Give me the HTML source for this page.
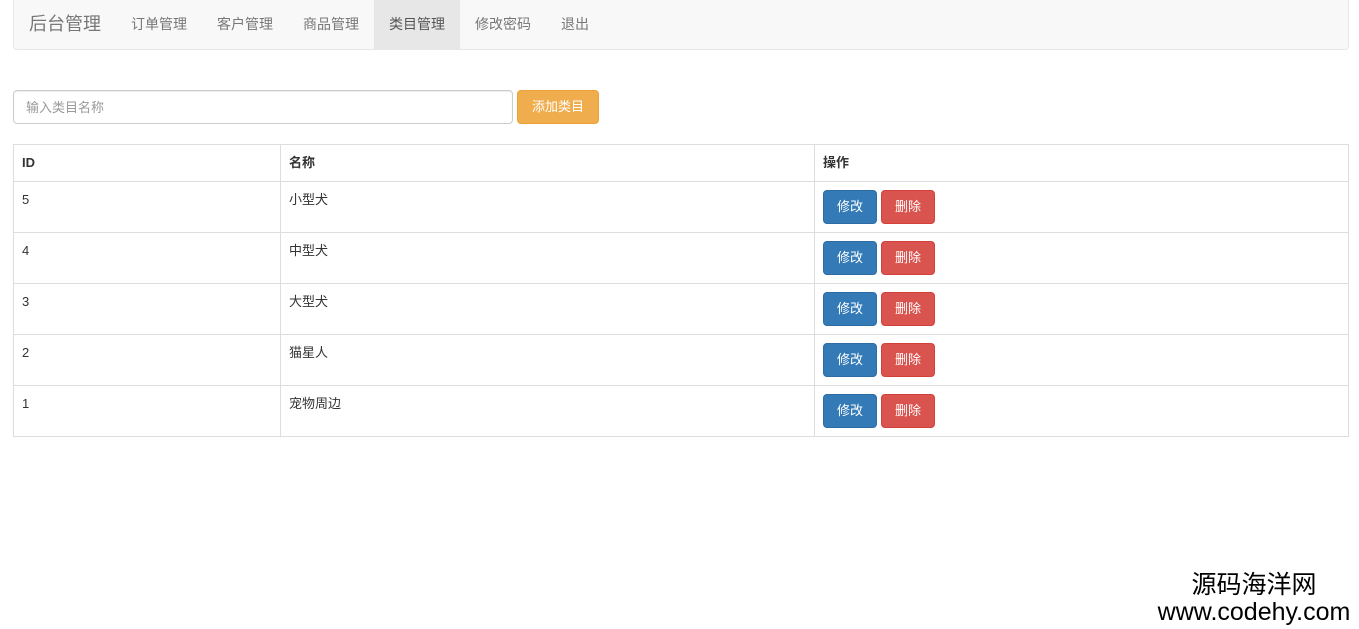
<!DOCTYPE html>
<html><head><meta charset="utf-8"><style>
body{margin:0;background:#fff;font-family:"Liberation Sans","Noto Sans CJK SC",sans-serif;font-size:13px;color:#333;width:1359px;height:629px;overflow:hidden;position:relative}
.nav{position:absolute;left:13px;top:-1px;width:1334px;height:49px;background:#f8f8f8;border:1px solid #e7e7e7;border-radius:0 0 4px 4px}
.nav span{position:absolute;top:0;height:49px;line-height:49px;color:#777;font-size:14px}
.brand{font-size:18px!important;left:15px}
.act{background:#e7e7e7;color:#555!important}
input{position:absolute;left:13px;top:90px;width:500px;height:34px;border:1px solid #ccc;border-radius:4px;box-sizing:border-box;padding:0 12px;font-size:13px;font-family:inherit;box-shadow:inset 0 1px 1px rgba(0,0,0,.075)}
input::placeholder{color:#999}
.add{position:absolute;left:517px;top:90px;width:82px;height:34px;background:#f0ad4e;border:1px solid #eea236;border-radius:4px;box-sizing:border-box;color:#fff;line-height:32px;text-align:center}
table{position:absolute;left:13px;top:144px;width:1336px;border-collapse:collapse}
td,th{border:1px solid #ddd;padding:8px 8px;vertical-align:top;text-align:left;line-height:20px}
th{height:20px;font-weight:bold}
td{height:34px}
.b{display:inline-block;width:54px;height:34px;line-height:32px;box-sizing:border-box;border-radius:4px;color:#fff;text-align:center;margin-right:4px}
.e{background:#337ab7;border:1px solid #2e6da4}
.d{background:#d9534f;border:1px solid #d43f3a}
.wm{position:absolute;left:1150px;width:208px;top:572px;text-align:center;color:#000;line-height:27px;font-size:25px}
</style></head><body>
<div class="nav">
<span class="brand">后台管理</span>
<span style="left:117px">订单管理</span>
<span style="left:203px">客户管理</span>
<span style="left:289px">商品管理</span>
<span class="act" style="left:360px;width:86px;text-align:center">类目管理</span>
<span style="left:461px">修改密码</span>
<span style="left:547px">退出</span>
</div>
<input placeholder="输入类目名称">
<div class="add">添加类目</div>
<table>
<tr><th style="width:250px">ID</th><th style="width:517px">名称</th><th>操作</th></tr>
<tr><td>5</td><td>小型犬</td><td><span class="b e">修改</span><span class="b d">删除</span></td></tr>
<tr><td>4</td><td>中型犬</td><td><span class="b e">修改</span><span class="b d">删除</span></td></tr>
<tr><td>3</td><td>大型犬</td><td><span class="b e">修改</span><span class="b d">删除</span></td></tr>
<tr><td>2</td><td>猫星人</td><td><span class="b e">修改</span><span class="b d">删除</span></td></tr>
<tr><td>1</td><td>宠物周边</td><td><span class="b e">修改</span><span class="b d">删除</span></td></tr>
</table>
<div class="wm"><div>源码海洋网</div><div>www.codehy.com</div></div>
</body></html>
